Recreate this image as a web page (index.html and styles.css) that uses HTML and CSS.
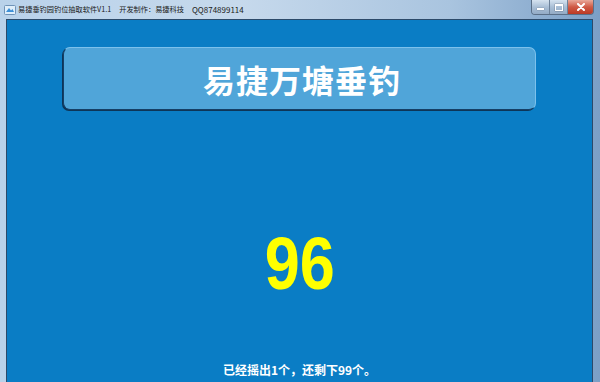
FILE: index.html
```html
<!DOCTYPE html>
<html lang="zh-CN">
<head>
  <meta charset="UTF-8">
  <title>易捷垂钓园钓位抽取软件V1.1</title>
  <link rel="stylesheet" href="styles.css">
</head>
<body>
  <div class="window">
    <div class="titlebar">
      <svg class="app-icon" width="12" height="12" viewBox="0 0 12 12">
        <rect x="0.5" y="1.5" width="11" height="9" rx="1" fill="#dfeefa" stroke="#6f93b8"/>
        <path d="M2 8 L5 4 L7 6.5 L8.5 5 L10 8 Z" fill="#3d8fd6"/>
      </svg>
      <span class="title-text">易捷垂钓园钓位抽取软件V1.1</span>
      <span class="title-text gap">开发制作：易捷科技</span>
      <span class="title-text gap qq">QQ874899114</span>
      <div class="controls">
        <div class="ctl ctl-min"><span class="dash"></span></div>
        <div class="ctl ctl-max"><span class="box"></span></div>
        <div class="ctl ctl-close">
          <svg width="10" height="8" viewBox="0 0 10 8">
            <path d="M2 1 L8 7 M8 1 L2 7" stroke="#fff" stroke-width="2" stroke-linecap="round"/>
          </svg>
        </div>
      </div>
    </div>
    <div class="client">
      <div class="banner">易捷万塘垂钓</div>
      <div class="number">96</div>
      <p class="status">已经摇出1个，还剩下99个。</p>
    </div>
  </div>
</body>
</html>
```

FILE: styles.css
```css
body {
  margin: 0;
  width: 600px;
  height: 382px;
  overflow: hidden;
  font-family: "Noto Sans CJK SC", "Noto Sans", sans-serif;
}
.window {
  height: 382px;
  display: flex;
  flex-direction: column;
  background: linear-gradient(90deg, #b9d2ea 0%, #c6d9ec 40%, #a9c4df 75%, #7b9fc6 100%);
}
.titlebar {
  height: 19px;
  display: flex;
  align-items: center;
  padding-left: 4px;
}
.app-icon {
  margin-right: 2px;
  flex: none;
}
.title-text {
  font-size: 7.2px;
  color: #1b1b1b;
  line-height: 19px;
  white-space: nowrap;
}
.gap {
  margin-left: 8px;
}
.qq {
  font-size: 8px;
}
.controls {
  margin-left: auto;
  margin-right: 6px;
  align-self: flex-start;
  display: flex;
  height: 14px;
  border: 1px solid #5a6f88;
  border-top: none;
  border-radius: 0 0 4px 4px;
  overflow: hidden;
}
.ctl {
  display: flex;
  align-items: center;
  justify-content: center;
  width: 17px;
  background: linear-gradient(#d6e3f0, #a9bfd6 50%, #93abc6);
  border-right: 1px solid #6d829a;
}
.ctl-close {
  width: 25px;
  border-right: none;
  background: linear-gradient(#e9a99a, #cf5a45 50%, #bb3a25);
}
.dash {
  width: 7px;
  height: 2px;
  margin-top: 4px;
  background: #fff;
  box-shadow: 0 0 1px #334;
}
.box {
  width: 6px;
  height: 4px;
  border: 1px solid #fff;
  border-top-width: 2px;
  box-shadow: 0 0 1px #334;
}
.client {
  flex: 1;
  margin: 0 7px 0 6px;
  background: #0a7dc5;
  border-top: 1px solid #2c4a6a;
  border-left: 1px solid #2c4a6a;
  border-right: 1px solid #2c4a6a;
  display: flex;
  flex-direction: column;
  align-items: center;
}
.banner {
  margin-top: 27px;
  width: 466px;
  height: 61px;
  padding-left: 5px;
  border: 1px solid #7cc1ec;
  border-left-color: #163f66;
  border-bottom-color: #163f66;
  border-radius: 7px;
  box-shadow: -1px 1px 0 #0d3558;
  background: #50a5d9;
  color: #fff;
  font-size: 32px;
  letter-spacing: 1px;
  font-weight: bold;
  display: flex;
  align-items: center;
  justify-content: center;
}
.number {
  margin-top: 116px;
  font-family: "Liberation Sans", sans-serif;
  font-weight: bold;
  font-size: 75px;
  line-height: 1;
  color: #ffff00;
  transform: scaleX(0.84);
}
.status {
  margin: 63px 0 0;
  font-size: 12px;
  line-height: 1;
  font-weight: bold;
  color: #fff;
}
```
